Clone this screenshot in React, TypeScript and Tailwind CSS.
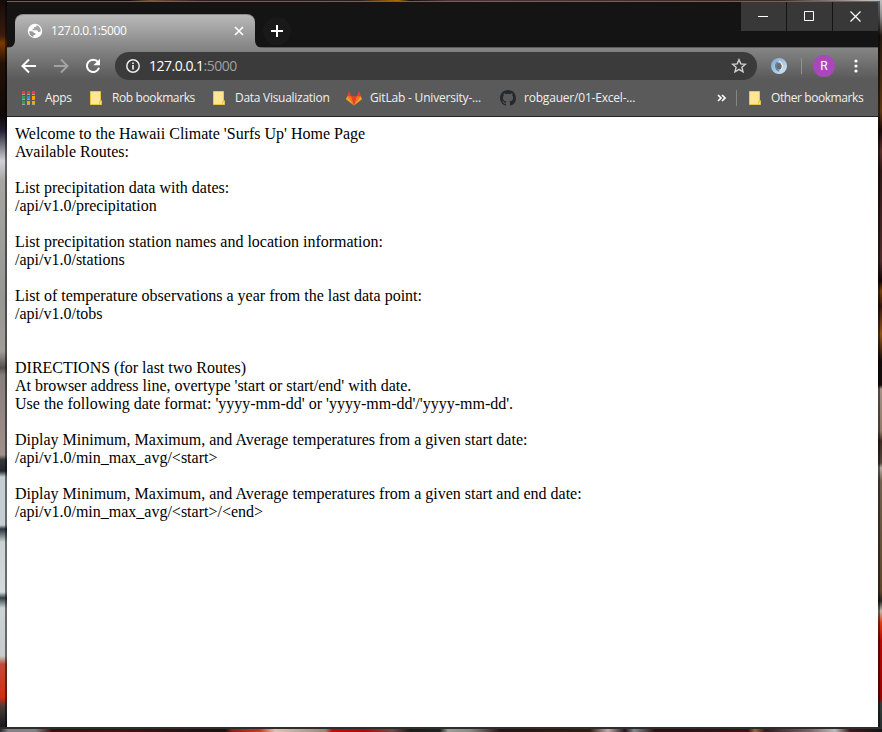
import React from "react";

const UI = "font-['Open_Sans','Noto_Sans',sans-serif]";

const Folder = () => (
  <svg width="12" height="14" viewBox="0 0 12 14" className="shrink-0">
    <path d="M.5.5h10v9.3h1v3.7H.5z" fill="#ffe694" stroke="#ecc544" />
    <path d="M9.5 13V10.500h2" fill="none" stroke="#ecc544" />
  </svg>
);

const APP_COLORS = [
  "#ea4335", "#ea4335", "#ea4335",
  "#34a05a", "#2f8cf0", "#f5a700",
  "#34a05a", "#f5a700", "#f5a700",
];

const Apps = () => (
  <svg width="14" height="15" viewBox="0 0 14 15" className="shrink-0" shapeRendering="crispEdges">
    {APP_COLORS.map((c, i) => (
      <g key={i}>
        <rect x={(i % 3) * 5} y={Math.floor(i / 3) * 5} width="3" height="3" fill={c} />
        <rect x={(i % 3) * 5} y={Math.floor(i / 3) * 5 + 3} width="3" height="1" fill="#a3a3a3" />
      </g>
    ))}
  </svg>
);

const GitLab = () => (
  <svg width="16" height="16" viewBox="0 0 16 16" className="shrink-0">
    <path d="M8 15.500 0 9.300 1.200 6.300h4L8 15.500l2.800-9.200h4L16 9.300z" fill="#fca326" />
    <path d="M8 15.500 1.200 6.300h4zM8 15.500l6.800-9.200h-4z" fill="#fc6d26" />
    <path d="M8 15.500 5.200 6.300h5.600z" fill="#e24329" />
    <path d="M1.200 6.300 2.800 1.200q.2-.4.400 0l2 5.100zM14.800 6.300l-1.600-5.100q-.2-.4-.4 0l-2 5.100z" fill="#e24329" />
  </svg>
);

const GitHub = () => (
  <svg width="16" height="16" viewBox="0 0 16 16" className="shrink-0" fill="#24292e">
    <path d="M8 0C3.580 0 0 3.580 0 8c0 3.540 2.290 6.530 5.470 7.590.4.070.55-.17.55-.38 0-.19-.01-.82-.01-1.490-2.010.37-2.530-.49-2.690-.94-.09-.23-.48-.94-.82-1.130-.28-.15-.68-.52-.01-.53.63-.01 1.080.58 1.230.82.72 1.210 1.870.87 2.330.66.070-.52.28-.87.51-1.070-1.780-.2-3.640-.89-3.640-3.950 0-.87.31-1.590.82-2.150-.08-.2-.36-1.020.08-2.120 0 0 .67-.21 2.200.82a7.600 7.600 0 0 1 4 0c1.530-1.040 2.200-.82 2.200-.82.44 1.100.16 1.920.08 2.120.51.56.82 1.270.82 2.150 0 3.070-1.870 3.750-3.650 3.950.29.25.54.73.54 1.480 0 1.070-.01 1.930-.01 2.200 0 .21.15.46.55.38A8 8 0 0 0 16 8c0-4.420-3.580-8-8-8z" />
  </svg>
);

const Globe = () => (
  <svg width="16" height="16" viewBox="0 0 16 16" className="shrink-0">
    <circle cx="8" cy="8" r="7.200" fill="#fff" />
    <path d="M2.200 8.200h2.600c1.500 0 1.900.9 1.900 1.800h1.600v1.900H6.500v2.200C3.700 13.500 2 11 2.200 8.200z" fill="#999" />
    <path d="M9.600 2.200C9.500 3.800 8.700 4 7.200 4v1.700H5.600v1.500h4.200c.9 0 1.100 1 1.100 1.900h1.300c.7 0 1.300-.4 1.600-1C13.900 5.200 12 2.800 9.600 2.200z" fill="#a4a4a4" />
  </svg>
);

const Back = ({ forward = false }: { forward?: boolean }) => (
  <svg width="16" height="16" viewBox="0 0 16 16" fill="none" stroke={forward ? "#a2a2a2" : "#fff"} strokeWidth="2" className="shrink-0">
    <path d={forward ? "M1 8h13M8 1.500 14.500 8 8 14.500" : "M15 8H2M8 1.500 1.500 8 8 14.500"} />
  </svg>
);

const Reload = () => (
  <svg width="16" height="16" viewBox="0 0 16 16" className="shrink-0">
    <path d="M13 4A6.200 6.200 0 1 0 14 9.800" fill="none" stroke="#fff" strokeWidth="2" />
    <path d="M15 .7v6.600H8.400z" fill="#fff" />
  </svg>
);

const LINES = [
  "Welcome to the Hawaii Climate 'Surfs Up' Home Page",
  "Available Routes:",
  "",
  "List precipitation data with dates:",
  "/api/v1.0/precipitation",
  "",
  "List precipitation station names and location information:",
  "/api/v1.0/stations",
  "",
  "List of temperature observations a year from the last data point:",
  "/api/v1.0/tobs",
  "",
  "",
  "DIRECTIONS (for last two Routes)",
  "At browser address line, overtype 'start or start/end' with date.",
  "Use the following date format: 'yyyy-mm-dd' or 'yyyy-mm-dd'/'yyyy-mm-dd'.",
  "",
  "Diplay Minimum, Maximum, and Average temperatures from a given start date:",
  "/api/v1.0/min_max_avg/<start>",
  "",
  "Diplay Minimum, Maximum, and Average temperatures from a given start and end date:",
  "/api/v1.0/min_max_avg/<start>/<end>",
];

const TitleBar = () => (
  <div className="flex h-[45px] bg-[#141414]">
    {/* The flared feet join the tab to the toolbar beneath it. */}
    <svg width="8" height="8" viewBox="0 0 8 8" className="relative z-10 mt-[38px] shrink-0">
      <path d="M8 0v8H0C5 8 8 5 8 0z" fill="#888" />
    </svg>
    <div className="relative z-10 mt-3 flex h-[35px] w-[240px] items-center rounded-t-lg border-t border-[#8a8a8a] bg-linear-to-b from-[#b9b9b9] to-[#848484] pr-[11px] pb-0.5 pl-3">
      <Globe />
      <span className="ml-2 flex-1 text-[12px] tracking-[-0.42px] text-white">127.0.0.1:5000</span>
      <svg width="10" height="10" viewBox="0 0 10 10" stroke="#fff" strokeWidth="1.7"><path d="m1 1 8 8M9 1 1 9" /></svg>
    </div>
    <svg width="8" height="8" viewBox="0 0 8 8" className="relative z-10 mt-[38px] shrink-0">
      <path d="M0 0v8h8C3 8 0 5 0 0z" fill="#888" />
    </svg>
    <div className="mt-[15px] flex size-7 items-center justify-center rounded-full bg-[#191919]">
      <svg width="12" height="12" viewBox="0 0 12 12" stroke="#fff" strokeWidth="2"><path d="M6 0v12M0 6h12" /></svg>
    </div>
    <div className="ml-auto flex h-[29px] gap-px">
      <div className="flex w-[45px] items-center justify-center bg-[#383838] pr-px"><svg width="10" height="1"><path d="M0 .5h10" stroke="#fff" /></svg></div>
      <div className="flex w-[45px] items-center justify-center bg-[#383838] pr-px pb-px"><svg width="10" height="10"><path d="M.5.5h9v9h-9z" fill="none" stroke="#fff" /></svg></div>
      <div className="flex w-[45px] items-center justify-center bg-[#383838] pr-px pb-px"><svg width="11" height="11" stroke="#fff" strokeWidth="1.200"><path d="m.5.5 10 10M10.500.5l-10 10" /></svg></div>
    </div>
  </div>
);

const Toolbar = () => (
  <div className="flex h-[35px] items-center pl-3.5">
    <Back />
    <div className="ml-4 flex"><Back forward /></div>
    <div className="ml-4 flex"><Reload /></div>
    <div className="ml-[14px] flex h-7 w-[642px] items-center rounded-full bg-[#3b3b3b] pr-2.5 pl-[11px]">
      <svg width="14" height="14" viewBox="0 0 14 14" fill="none" stroke="#ececec" strokeWidth="1.500"><circle cx="7" cy="7" r="6.200" /><path d="M7 6v4.500M7 3.500V5" strokeWidth="1.700" /></svg>
      <span className="ml-[9px] flex-1 text-[14px] tracking-[-0.5px] text-white">127.0.0.1<span className="text-[#a0a0a0]">:5000</span></span>
      <svg width="16" height="16" viewBox="0 0 16 16" fill="none" stroke="#d2d2d2" strokeWidth="1.400"><path d="m8 1.700 1.800 4.200 4.600.4-3.500 3 1.100 4.500L8 11.400l-4 2.400 1.100-4.500-3.500-3 4.600-.4z" /></svg>
    </div>
    <svg width="18" height="18" viewBox="0 0 18 18" className="ml-[13px]">
      <defs>
        <linearGradient id="ring" x1="0" y1="0" x2="1" y2="1"><stop stopColor="#7fa6cc" /><stop offset=".45" stopColor="#a4c2de" /><stop offset="1" stopColor="#dceaf6" /></linearGradient>
      </defs>
      <path fillRule="evenodd" d="M9 1a8 8 0 1 0 0 16A8 8 0 1 0 9 1zM9 5.800c2.200 0 3.300 1.500 3.300 3.400S10.900 12.800 9 12.600 5.900 11 6 9s1.200-3.200 3-3.200z" fill="url(#ring)" />
      <path d="M7.500 5C4.500 7.500 5 12 9 14" fill="none" stroke="#5687b8" strokeWidth="1.500" />
      <path d="M10.500 13.200C13.500 11 13 6.500 9 4" fill="none" stroke="#e6f0f8" strokeWidth="1.300" />
    </svg>
    <div className="ml-[13px] h-4 w-px bg-[#919191]" />
    <div className="ml-[11px] flex size-[22px] items-center justify-center rounded-full bg-[#ab47bc] font-[Roboto,sans-serif] text-[12px] text-white">R</div>
    <svg width="4" height="14" viewBox="0 0 4 14" fill="#fff" className="ml-[19px]"><circle cx="2" cy="2" r="1.600" /><circle cx="2" cy="7" r="1.600" /><circle cx="2" cy="12" r="1.600" /></svg>
  </div>
);

const Bookmarks = () => (
  <div className="flex h-[33px] items-center pb-[3px] pl-[15px] text-[12px] whitespace-nowrap text-[#f0f0f0]">
    <Apps />
    <span className="ml-[9px] w-[45px] tracking-[-0.3px]">Apps</span>
    <Folder />
    <span className="ml-[10px] w-[101px] tracking-[-0.38px]">Rob bookmarks</span>
    <Folder />
    <span className="ml-[10px] w-[111px] tracking-[-0.28px]">Data Visualization</span>
    <GitLab />
    <span className="ml-2 w-[130px] tracking-[-0.2px]">GitLab - University-...</span>
    <GitHub />
    <span className="ml-2 flex-1 tracking-[-0.2px]">robgauer/01-Excel-...</span>
    <svg width="9" height="8" viewBox="0 0 9 8" fill="none" stroke="#fff" strokeWidth="1.700"><path d="m1 1 3 3-3 3M5 1l3 3-3 3" /></svg>
    <div className="mr-3 ml-2.5 h-4 w-px bg-[#858585]" />
    <Folder />
    <span className="ml-[10px] w-[107px] tracking-[-0.42px]">Other bookmarks</span>
  </div>
);

export default function App() {
  return (
    <div className="flex h-[732px] w-[882px] flex-col overflow-hidden bg-[#251b19]">
      <div className="h-px bg-[linear-gradient(90deg,#150b0b_0_130px,#77512c_150px,#301b26_200px,#28201d_360px,#b66b00_398px,#170e12_410px,#4d3437_450px,#3a2924_780px,#bbb_868px)]" />
      <div className="flex h-[726px]">
        <div className="flex w-[7px] bg-[linear-gradient(180deg,#160c0b_0px,#3b1c0e_35px,#7a3900_42px,#241006_62px,#100808_115px,#252235_130px,#cfd1d6_160px,#a6a5a2_180px,#969793_300px,#a09d98_350px,#544e4b_367px,#877e7c_374px,#a0908c_454px,#343638_459px,#22282e_470px,#c5ced3_476px,#c5ced3_524px,#29333b_528px,#cbd2d3_541px,#d5dadd_591px,#34404a_597px,#cbd4d4_607px,#c7cccb_655px,#bf4b39_663px,#d32d12_696px,#493b38_706px,#17191c_726px)]">
          <div className="ml-[5px] w-0.5 bg-black/50" />
        </div>
        <main className={`flex w-[871px] flex-col border-t border-[#1978c9] bg-white ${UI}`}>
          <TitleBar />
          <div className="h-[70px] border-t border-b border-t-[#5b5b5b] border-b-[#242424] bg-[linear-gradient(180deg,#858585_0px,#5a5a5a_31px)]">
            <Toolbar />
            <Bookmarks />
          </div>
          <div className="flex-1 bg-white px-2 pt-2 font-['Liberation_Serif',serif] text-[16px] leading-[18px] text-black">
            {LINES.map((line, i) => <p key={i} className="h-[18px] whitespace-pre">{line}</p>)}
          </div>
        </main>
        <div className="flex w-1 bg-[linear-gradient(180deg,#bdbdbd_0px,#8c8c8c_15px,#211811_35px,#5b3612_110px,#190908_130px,#572d27_150px,#2d1816_170px,#4b2b2a_260px,#130506_280px,#724009_290px,#32150e_305px,#8d5216_333px,#130b0b_360px,#150c08_384px,#a49185_388px,#917967_430px,#3c291f_440px,#544439_462px,#b7aca1_467px,#71614e_480px,#5d452b_590px,#282521_600px,#c2b7ab_610px,#df3c0d_622px,#b60802_640px,#950400_697px,#323d39_703px,#29302f_726px)]">
          <div className="w-0.5 bg-black/50" />
        </div>
      </div>
      <div className="h-[5px] border-t-2 border-[#2b2e2b] bg-[linear-gradient(90deg,#25262a_0,#858186_8px,#858186_35px,#37110d_52px,#3b1510_125px,#1b110f_225px,#8b201b_232px,#c73827_260px,#ddc4b7_275px,#9b887e_325px,#c70807_332px,#b30909_365px,#6d4948_392px,#201c19_410px,#202421_440px,#9c9e95_448px,#8a8b80_470px,#291612_500px,#321c12_590px,#c5acae_608px,#24131b_625px,#87888d_634px,#291012_655px,#361513_748px,#9a6440_755px,#321a1e_765px,#7b6267_810px,#bbb_835px,#3d1918_850px,#151517_882px)]" />
    </div>
  );
}
